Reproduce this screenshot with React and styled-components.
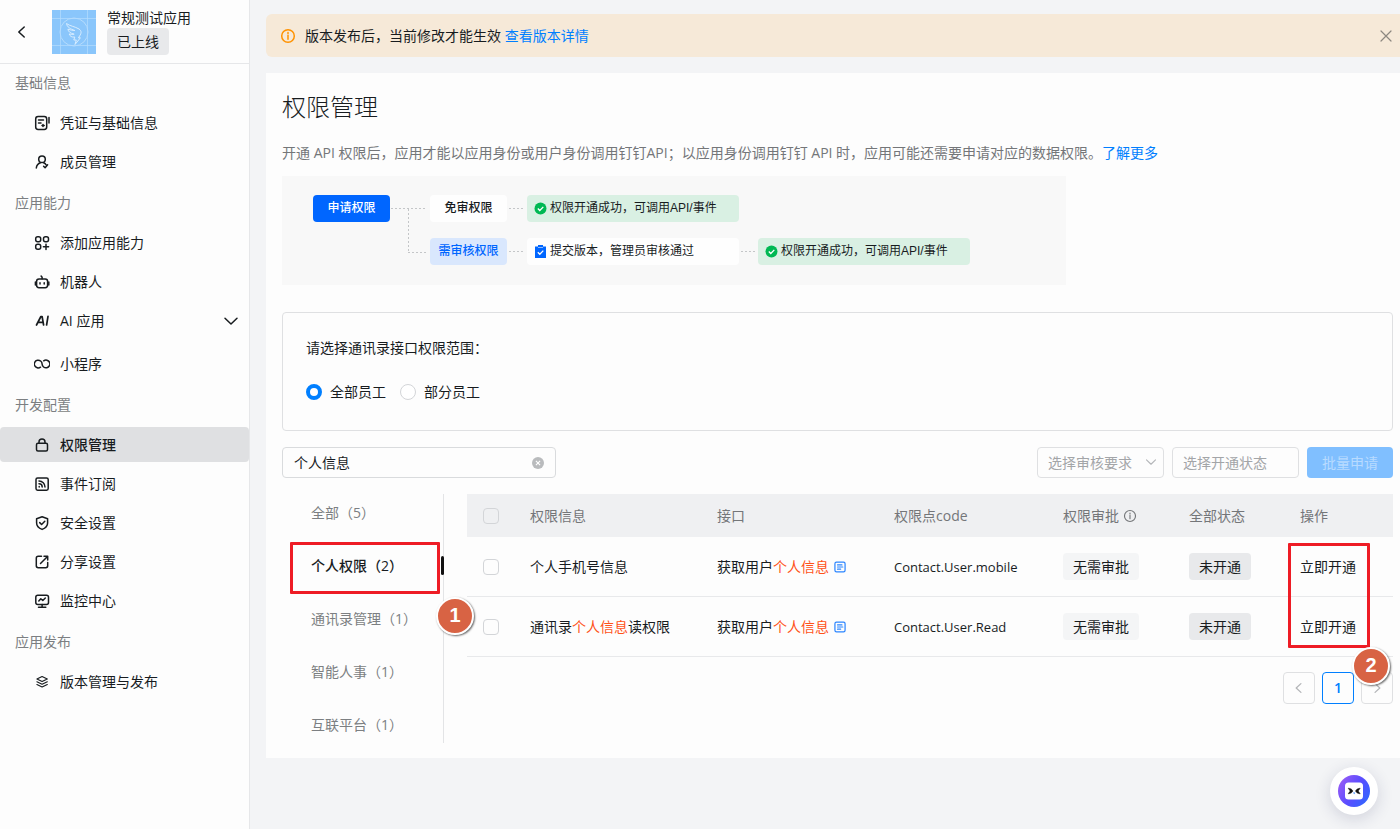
import React, { useState } from "react";
import styled, { createGlobalStyle } from "styled-components";

const GlobalStyle = createGlobalStyle`
  * {
    box-sizing: border-box;
  }
  body {
    margin: 0;
    background: #f3f4f6;
    color: #181c1f;
    font: 14px/22px "Open Sans", "Noto Sans CJK SC", sans-serif;
  }
  button, input, select {
    font: inherit;
    color: inherit;
  }
  a {
    color: #007fff;
    text-decoration: none;
  }
  svg {
    display: block;
    flex: none;
  }
`;

/* ---------- layout ---------- */

const Page = styled.div`
  display: flex;
  min-height: 100vh;
  overflow-x: hidden;
`;

const Sidebar = styled.aside`
  flex: none;
  width: 250px;
  background: #fdfdfd;
  border-right: 1px solid #e6e7e9;
`;

const AppHeader = styled.header`
  display: flex;
  align-items: center;
  height: 64px;
  padding-left: 14px;
  border-bottom: 1px solid #e6e7e9;
`;

const BackButton = styled.button`
  width: 16px;
  height: 16px;
  margin-right: 22px;
  padding: 0;
  border: 0;
  background: none;
`;

const AppInfo = styled.div`
  display: flex;
  flex-direction: column;
  align-items: flex-start;
  margin-left: 11px;
  line-height: 20px;
`;

const Tag = styled.span`
  display: inline-block;
  height: 27px;
  padding: 0 10px;
  border-radius: 4px;
  line-height: 28px;
  background: ${(props) => (props.$light ? "#f4f5f6" : "#e8e9eb")};
`;

const Group = styled.section`
  margin-bottom: 5px;
`;

const GroupTitle = styled.h2`
  height: 38px;
  margin: 0 0 3px;
  padding-left: 15px;
  font-size: 14px;
  font-weight: 400;
  line-height: 38px;
  color: #7c7f82;
`;

const NavList = styled.ul`
  display: flex;
  flex-direction: column;
  gap: 4px;
  margin: 0;
  padding: 0;
  list-style: none;
`;

const NavLink = styled.a`
  display: flex;
  align-items: center;
  gap: 10px;
  height: 35px;
  margin-bottom: ${(props) => (props.$parent ? "4px" : "0")};
  padding: 0 10px 0 34px;
  border-radius: 4px;
  background: ${(props) => (props.$active ? "#dfe0e2" : "none")};
  color: #181c1f;
  font-weight: ${(props) => (props.$active ? 500 : 400)};

  span {
    flex: 1;
  }
`;

const Main = styled.main`
  flex: 1;
  min-width: 0;
  padding: 14px 0 0 16px;
`;

const Banner = styled.div`
  display: flex;
  align-items: center;
  gap: 9px;
  height: 43px;
  margin-bottom: 16px;
  padding: 0 6px 0 14px;
  border-radius: 6px 0 0 6px;
  background: #f6e9d8;

  p {
    flex: 1;
    margin: 0;
  }
`;

const IconButton = styled.button`
  display: flex;
  padding: 0;
  border: 0;
  background: none;
  color: ${(props) => props.$color || "#8c8780"};
`;

const Card = styled.div`
  padding: 18px 7px 15px 16px;
  background: #fdfdfd;
`;

const Title = styled.h1`
  margin: 0 0 19px;
  font-size: 24px;
  font-weight: 300;
  line-height: 32px;
`;

const Description = styled.p`
  margin: 0 0 12px;
  color: #747679;
`;

/* ---------- flow diagram ---------- */

const Flow = styled.div`
  display: grid;
  grid-template-columns: 77px 40px 77px 20px 212px 19px 212px;
  grid-template-rows: 27px 27px;
  row-gap: 16px;
  max-width: 784px;
  margin-bottom: 27px;
  padding: 19px 31px 20px;
  background: #f8f8f8;
  font-family: "Liberation Sans", "Noto Sans CJK SC", sans-serif;
  font-size: 12px;
  line-height: 27px;
`;

const Step = styled.div`
  grid-column: ${(props) => props.$col};
  grid-row: ${(props) => props.$row || 1};
  border-radius: 4px;
  background: ${(props) => props.$bg || "#fefefe"};
  color: ${(props) => props.$color || "#181c1f"};
  font-weight: 500;
  text-align: center;
`;

const Result = styled.div`
  display: flex;
  align-items: center;
  gap: 3px;
  grid-column: ${(props) => props.$col};
  grid-row: ${(props) => props.$row || 1};
  padding-left: 7px;
  border-radius: 4px;
  background: ${(props) => (props.$done ? "#d9f0e3" : "#fefefe")};
`;

const Branch = styled.svg`
  grid-column: 2;
  grid-row: 1 / 3;
`;

const Link = styled.svg`
  grid-column: ${(props) => props.$col};
  grid-row: ${(props) => props.$row || 1};
`;

/* ---------- scope, filters ---------- */

const Scope = styled.fieldset`
  min-width: 0;
  margin: 0 0 16px;
  padding: 24px 23px 27px;
  border: 1px solid #dfe0e2;
  border-radius: 4px;

  legend {
    float: left;
    width: 100%;
    margin-bottom: 22px;
    padding: 0;
  }
`;

const Radios = styled.div`
  display: flex;
  gap: 14px;
  clear: both;
`;

const RadioLabel = styled.label`
  display: flex;
  align-items: center;
  gap: 8px;

  input {
    appearance: none;
    width: 16px;
    height: 16px;
    margin: 0;
    border: 1px solid #d3d5d8;
    border-radius: 50%;
    background: #fff;
  }
  input:checked {
    border: 4px solid #007fff;
  }
`;

const Toolbar = styled.div`
  display: flex;
  gap: 8px;
  height: 31px;
  margin-bottom: 16px;
`;

const SearchBox = styled.div`
  display: flex;
  align-items: center;
  width: 274px;
  margin-right: auto;
  padding: 0 11px;
  border: 1px solid #d9dbdd;
  border-radius: 4px;

  input {
    flex: 1;
    min-width: 0;
    padding: 0;
    border: 0;
    outline: 0;
    background: none;
  }
`;

const SelectBox = styled.div`
  display: flex;
  position: relative;
  width: 127px;

  select {
    appearance: none;
    width: 100%;
    padding: 0 10px;
    border: 1px solid #dfe0e2;
    border-radius: 4px;
    background: #fdfdfd;
    color: #a3a5a8;
  }
  svg {
    position: absolute;
    top: 9px;
    right: 7px;
    pointer-events: none;
  }
`;

const ApplyButton = styled.button`
  width: 86px;
  padding: 0;
  border: 0;
  border-radius: 4px;
  background: #80bfff;
  color: #b8dbff;
`;

/* ---------- tabs and table ---------- */

const Columns = styled.div`
  display: flex;
  align-items: flex-start;
  gap: 23px;
`;

const Tabs = styled.nav`
  display: flex;
  flex-direction: column;
  flex: none;
  gap: 16px;
  width: 162px;
  border-right: 1px solid #e3e4e6;
`;

const Tab = styled.button`
  position: relative;
  height: 37px;
  padding: 0 0 0 29px;
  border: 0;
  background: none;
  color: ${(props) => (props.$active ? "#181c1f" : "#7c7f82")};
  font-weight: ${(props) => (props.$active ? 500 : 400)};
  text-align: left;
`;

const TabMark = styled.span`
  position: absolute;
  top: 9px;
  right: -1px;
  width: 3px;
  height: 19px;
  border-radius: 2px;
  background: #111;
`;

const Content = styled.div`
  flex: 1;
  min-width: 0;
  position: relative;
`;

const Table = styled.table`
  width: 100%;
  margin-bottom: 15px;
  border-collapse: separate;
  border-spacing: 0;
  table-layout: fixed;

  th, td {
    padding: 0 0 0 16px;
    font-weight: 400;
    text-align: left;
    white-space: nowrap;
  }
  th {
    height: 43px;
    background: #eff0f2;
    color: #747679;
  }
  td {
    height: 60px;
    border-bottom: 1px solid #e8e9eb;
  }
`;

const CellLine = styled.span`
  display: flex;
  align-items: center;
  gap: 4px;
`;

const Code = styled.span`
  font-size: 13px;
`;

const Mark = styled.em`
  color: #ff5219;
  font-style: normal;
`;

const Checkbox = styled.input`
  appearance: none;
  display: block;
  width: 16px;
  height: 16px;
  margin: 0;
  border: 1px solid #d3d5d8;
  border-radius: 4px;
`;

const TextButton = styled.button`
  padding: 0;
  border: 0;
  background: none;
`;

const Pager = styled.div`
  display: flex;
  justify-content: flex-end;
  gap: 7px;
`;

const PageButton = styled.button`
  display: flex;
  align-items: center;
  justify-content: center;
  width: 32px;
  height: 32px;
  padding: 0;
  border: 1px solid ${(props) => (props.$current ? "#007fff" : "#dfe0e2")};
  border-radius: 4px;
  background: none;
  color: ${(props) => (props.$current ? "#007fff" : "#b4b6b9")};
  font-weight: 600;
`;

/* ---------- overlays ---------- */

const Frame = styled.span`
  position: absolute;
  border: 3px solid #ee1c25;
  border-radius: 1px;
  pointer-events: none;
`;

const TabFrame = styled(Frame)`
  top: -5px;
  left: 8px;
  width: 150px;
  height: 52px;
`;

const ActionFrame = styled(Frame)`
  top: 49px;
  right: 23px;
  width: 82px;
  height: 105px;
`;

const Bubble = styled.span`
  position: absolute;
  width: 38px;
  height: 38px;
  border: 2px solid #fff;
  border-radius: 50%;
  background: #d86344;
  box-shadow: 1px 1px 2px rgba(0, 0, 0, 0.6);
  color: #fff;
  font: bold 20px/33px "Liberation Sans", Arial, sans-serif;
  text-align: center;
`;

const TabBubble = styled(Bubble)`
  top: 103px;
  left: -31px;
`;

const ActionBubble = styled(Bubble)`
  top: 153px;
  right: 3px;
`;

const Assistant = styled.button`
  display: flex;
  align-items: center;
  justify-content: center;
  position: fixed;
  right: 22px;
  bottom: 14px;
  width: 48px;
  height: 48px;
  padding: 0;
  border: 0;
  border-radius: 50%;
  background: #fff;
  box-shadow: 0 4px 16px rgba(30, 35, 90, 0.16);
`;

/* ---------- icons ---------- */

const shapes = {
  credential: (
    <>
      <rect x="1.7" y="1.5" width="11" height="13" rx="2.4" />
      <path d="M4.5 5h5M4.5 8h2.5M15 2.5v5.5M9 9.5v2M8 10.5h2.2" />
    </>
  ),
  member: (
    <>
      <circle cx="8" cy="5.3" r="3.3" />
      <path d="M2.3 14c.3-2.8 1.9-4.6 4.2-5.3M9.6 8.7c1.1.5 2 1.2 2.6 2.3M9.6 12.2l1.5 1.6 2.500-3" />
    </>
  ),
  apps: (
    <>
      <rect x="1.7" y="1.7" width="5" height="5" rx="2" />
      <rect x="9.5" y="1.7" width="5" height="5" rx="2" />
      <rect x="1.7" y="9.3" width="5" height="5" rx="2" />
      <path d="M12 9.2v5.2M9.400 11.800h5.200" />
    </>
  ),
  robot: (
    <>
      <rect x="2.600" y="4.900" width="11" height="8.800" rx="2.400" />
      <path d="M1.400 8v3M14.800 8v3M6 8.700v1.200M10.200 8.700v1.200M8.100 4.800V3.200L7.100 2" />
    </>
  ),
  loop: <path d="M6.500 11.200A3.900 3.900 0 1 1 8.100 8 3.900 3.900 0 1 0 9.700 4.800" />,
  lock: (
    <>
      <rect x="2.500" y="6.300" width="11" height="7.700" rx="1.500" />
      <path d="M5 6.200V5a3 3 0 0 1 6 0v1.200" />
    </>
  ),
  feed: (
    <>
      <rect x="2" y="2" width="12.200" height="12.200" rx="1.600" />
      <path d="M5 5c3.400 0 6 2.600 6 6M5 7.800c1.900 0 3.200 1.300 3.200 3.200M5.200 10.500v.5" />
    </>
  ),
  shield: (
    <>
      <path d="M8.100 1.800 13.600 3.700V8c0 3-2.200 5.200-5.500 6.400C4.800 13.200 2.600 11 2.600 8V3.700z" />
      <path d="m5.700 7.600 1.900 1.900 3.200-3.200" />
    </>
  ),
  share: (
    <path d="M7.500 2.300H4.200A1.900 1.900 0 0 0 2.300 4.200v7.600c0 1 .9 1.900 1.900 1.900h7.600c1 0 1.900-.9 1.900-1.900V8.500M10 2.300h3.700V6M13.500 2.500 6.500 9.500" />
  ),
  monitor: (
    <>
      <rect x="1.800" y="2.200" width="12.700" height="9.200" rx="2" />
      <path d="M4.800 8 6.800 5.700 8.800 7.500 11.300 5M8.100 11.500v2.600M4.500 14.200h7.300" />
    </>
  ),
  layers: (
    <path
      strokeWidth="1.100"
      d="M8.100 2.500 13.300 5 8.100 7.500 2.900 5zM2.900 7.700l5.200 2.500 5.200-2.500M2.900 10.500l5.200 2.500 5.200-2.500"
    />
  ),
  ai: <path strokeWidth="1.700" d="M2.500 12 6.900 3.500h1.200l1.500 8.500M4.300 9.400h4.600M14 3.400 12.600 12" />,
  left: <path d="M10.200 3 4.800 8l5.400 5" />,
  right: <path d="M5.800 3 11.200 8l-5.400 5" />,
  down: <path d="M2 5.200 8 11l6-5.800" />,
  close: <path strokeWidth="1.200" d="m3 3 10 10M13 3 3 13" />,
  info: (
    <>
      <circle cx="8" cy="8" r="6.300" />
      <path d="M8 7.200v4M8 4.600v1" />
    </>
  ),
  note: (
    <>
      <rect x="2.200" y="2.500" width="11.600" height="11" rx="1.800" />
      <path d="M5.200 5.600h5M5.200 8h6M5.200 10.500h3.500" />
    </>
  ),
};

const Icon = ({ name, size = 16, width = 1.5 }) => (
  <svg
    width={size}
    height={size}
    viewBox="0 0 16 16"
    fill="none"
    stroke="currentColor"
    strokeWidth={width}
    strokeLinecap="round"
    strokeLinejoin="round"
    aria-hidden="true"
  >
    {shapes[name]}
  </svg>
);

const AppLogo = () => (
  <svg width="44" height="44" viewBox="0 0 44 44" fill="none" stroke="#b5dcfd" strokeWidth="1">
    <rect width="44" height="44" fill="#8ac6fb" stroke="none" />
    <path d="M0 8.500h44M0 35.500h44M8.500 0v44M35.500 0v44" strokeWidth=".7" />
    <circle cx="22" cy="22" r="14" />
    <path
      d="M14.500 13.500c3 2.500 8.500 3 12.500 5.500 3 2 2.300 4.500.6 7l-1.200 1.800h2L23 34.500l1.300-4.500h-2.500l1-3c-3 .5-5-.8-5.600-3 2 .5 3.500.5 5 .2-4-1-6-2.700-6.300-5 2 .8 5 1.300 7 1.300-4.500-1.500-8-3.500-8.400-7z"
      stroke="#d8edff"
    />
  </svg>
);

const DoneIcon = () => (
  <svg width="13" height="13" viewBox="0 0 13 13">
    <circle cx="6.500" cy="6.500" r="6" fill="#00b853" />
    <path d="m3.800 6.500 2 2 3.500-3.600" fill="none" stroke="#fff" strokeWidth="1.300" />
  </svg>
);

const ClipIcon = () => (
  <svg width="13" height="13" viewBox="0 0 13 13">
    <path d="M1 1.500h3V0h5v1.500h3V13H1z" fill="#0066ff" />
    <path d="M4 2.500h5" stroke="#8fbaff" />
    <path d="m3.800 7.200 2 2 3.500-3.600" fill="none" stroke="#fff" strokeWidth="1.300" />
  </svg>
);

const ClearIcon = () => (
  <svg width="12" height="12" viewBox="0 0 12 12">
    <circle cx="6" cy="6" r="6" fill="#b9bbbd" />
    <path d="m3.900 3.900 4.200 4.200M8.100 3.900 3.900 8.100" stroke="#fff" strokeWidth="1.100" />
  </svg>
);

const AssistantIcon = () => (
  <svg width="32" height="32" viewBox="0 0 32 32">
    <defs>
      <linearGradient id="assistant" x1="0" y1="0.200" x2="1" y2="0.800">
        <stop offset="0" stopColor="#9a5cf5" />
        <stop offset="0.500" stopColor="#5b4dff" />
        <stop offset="1" stopColor="#2f66ff" />
      </linearGradient>
    </defs>
    <circle cx="16" cy="16" r="16" fill="url(#assistant)" />
    <rect x="7" y="7.500" width="18" height="17" rx="3.500" fill="#fff" />
    <path
      d="M10.200 13.200c2.400.2 4 1.200 4.700 2.800-.7 1.600-2.300 2.600-4.700 2.800l2-2.800zM22.200 13.200c-2.400.2-4 1.200-4.700 2.800.7 1.600 2.300 2.600 4.700 2.800l-2-2.800z"
      fill="#111"
      stroke="#111"
      strokeWidth=".5"
    />
    <path d="m15 17.500 1.200 1.700 1.200-1.700z" fill="#3c8cff" />
  </svg>
);

const FlowLink = ({ col, row }) => (
  <Link $col={col} $row={row} width="19" height="27" fill="none" stroke="#c4c6c8" strokeDasharray="2 2">
    <path d="M2 13.500h16" />
  </Link>
);

/* ---------- data ---------- */

const menu = [
  {
    title: "基础信息",
    items: [
      { icon: "credential", text: "凭证与基础信息" },
      { icon: "member", text: "成员管理" },
    ],
  },
  {
    title: "应用能力",
    items: [
      { icon: "apps", text: "添加应用能力" },
      { icon: "robot", text: "机器人" },
      { icon: "ai", text: "AI 应用", parent: true },
      { icon: "loop", text: "小程序" },
    ],
  },
  {
    title: "开发配置",
    items: [
      { icon: "lock", text: "权限管理", active: true },
      { icon: "feed", text: "事件订阅" },
      { icon: "shield", text: "安全设置" },
      { icon: "share", text: "分享设置" },
      { icon: "monitor", text: "监控中心" },
    ],
  },
  {
    title: "应用发布",
    items: [{ icon: "layers", text: "版本管理与发布" }],
  },
];

const tabs = ["全部（5）", "个人权限（2）", "通讯录管理（1）", "智能人事（1）", "互联平台（1）"];

const rows = [
  { name: "个人手机号信息", label: <>个人手机号信息</>, code: "Contact.User.mobile" },
  { name: "通讯录个人信息读权限", label: <>通讯录<Mark>个人信息</Mark>读权限</>, code: "Contact.User.Read" },
];

export default function App() {
  const [scope, setScope] = useState("all");
  const [keyword, setKeyword] = useState("个人信息");
  const [tab, setTab] = useState(1);

  return (
    <Page>
      <GlobalStyle />
      <Sidebar>
        <AppHeader>
          <BackButton aria-label="返回">
            <Icon name="left" />
          </BackButton>
          <AppLogo />
          <AppInfo>
            <span>常规测试应用</span>
            <Tag>已上线</Tag>
          </AppInfo>
        </AppHeader>
        {menu.map((group) => (
          <Group key={group.title}>
            <GroupTitle>{group.title}</GroupTitle>
            <NavList>
              {group.items.map((item) => (
                <li key={item.text}>
                  <NavLink href="#" $active={item.active} $parent={item.parent}>
                    <Icon name={item.icon} />
                    <span>{item.text}</span>
                    {item.parent && <Icon name="down" />}
                  </NavLink>
                </li>
              ))}
            </NavList>
          </Group>
        ))}
      </Sidebar>

      <Main>
        <Banner>
          <IconButton as="span" $color="#ff9200">
            <Icon name="info" />
          </IconButton>
          <p>
            版本发布后，当前修改才能生效 <a href="#">查看版本详情</a>
          </p>
          <IconButton aria-label="关闭">
            <Icon name="close" />
          </IconButton>
        </Banner>

        <Card>
          <Title>权限管理</Title>
          <Description>
            开通 API 权限后，应用才能以应用身份或用户身份调用钉钉API；以应用身份调用钉钉 API
            时，应用可能还需要申请对应的数据权限。<a href="#">了解更多</a>
          </Description>

          <Flow>
            <Step $col={1} $bg="#0066ff" $color="#fff">申请权限</Step>
            <Branch width="40" height="70" fill="none" stroke="#c4c6c8" strokeDasharray="2 2">
              <path d="M1 13.500h35M18.500 14v43M18 57.500h18" />
            </Branch>
            <Step $col={3}>免审权限</Step>
            <FlowLink col={4} />
            <Result $col={5} $done>
              <DoneIcon />
              权限开通成功，可调用API/事件
            </Result>
            <Step $col={3} $row={2} $bg="#d9e7fd" $color="#0066ff">需审核权限</Step>
            <FlowLink col={4} row={2} />
            <Result $col={5} $row={2}>
              <ClipIcon />
              提交版本，管理员审核通过
            </Result>
            <FlowLink col={6} row={2} />
            <Result $col={7} $row={2} $done>
              <DoneIcon />
              权限开通成功，可调用API/事件
            </Result>
          </Flow>

          <Scope>
            <legend>请选择通讯录接口权限范围：</legend>
            <Radios>
              <RadioLabel>
                <input type="radio" name="scope" checked={scope === "all"} onChange={() => setScope("all")} />
                全部员工
              </RadioLabel>
              <RadioLabel>
                <input type="radio" name="scope" checked={scope === "part"} onChange={() => setScope("part")} />
                部分员工
              </RadioLabel>
            </Radios>
          </Scope>

          <Toolbar>
            <SearchBox>
              <input aria-label="搜索权限" value={keyword} onChange={(e) => setKeyword(e.target.value)} />
              <IconButton aria-label="清空" onClick={() => setKeyword("")}>
                <ClearIcon />
              </IconButton>
            </SearchBox>
            <SelectBox>
              <select aria-label="选择审核要求">
                <option>选择审核要求</option>
              </select>
              <IconButton as="span" $color="#b4b6b9">
                <Icon name="down" size={12} />
              </IconButton>
            </SelectBox>
            <SelectBox>
              <select aria-label="选择开通状态">
                <option>选择开通状态</option>
              </select>
            </SelectBox>
            <ApplyButton disabled>批量申请</ApplyButton>
          </Toolbar>

          <Columns>
            <Tabs>
              {tabs.map((text, i) => (
                <Tab key={text} $active={i === tab} onClick={() => setTab(i)}>
                  {text}
                  {i === tab && <TabMark />}
                  {i === 1 && <TabFrame />}
                </Tab>
              ))}
            </Tabs>

            <Content>
              <Table>
                <colgroup>
                  <col width="47" />
                  <col width="187" />
                  <col width="177" />
                  <col width="169" />
                  <col width="126" />
                  <col width="111" />
                  <col width="109" />
                </colgroup>
                <thead>
                  <tr>
                    <th><Checkbox type="checkbox" aria-label="全选" /></th>
                    <th>权限信息</th>
                    <th>接口</th>
                    <th>权限点code</th>
                    <th>
                      <CellLine>
                        权限审批
                        <Icon name="info" size={14} width={1.3} />
                      </CellLine>
                    </th>
                    <th>全部状态</th>
                    <th>操作</th>
                  </tr>
                </thead>
                <tbody>
                  {rows.map((row) => (
                    <tr key={row.code}>
                      <td><Checkbox type="checkbox" aria-label={row.name} /></td>
                      <td>{row.label}</td>
                      <td>
                        <CellLine>
                          <span>获取用户<Mark>个人信息</Mark></span>
                          <IconButton $color="#2b85ff" aria-label="查看文档">
                            <Icon name="note" size={14} width={1.4} />
                          </IconButton>
                        </CellLine>
                      </td>
                      <td><Code>{row.code}</Code></td>
                      <td><Tag $light>无需审批</Tag></td>
                      <td><Tag>未开通</Tag></td>
                      <td><TextButton>立即开通</TextButton></td>
                    </tr>
                  ))}
                </tbody>
              </Table>
              <Pager>
                <PageButton aria-label="上一页"><Icon name="left" size={14} /></PageButton>
                <PageButton $current>1</PageButton>
                <PageButton aria-label="下一页"><Icon name="right" size={14} /></PageButton>
              </Pager>
              <ActionFrame />
              <TabBubble>1</TabBubble>
              <ActionBubble>2</ActionBubble>
            </Content>
          </Columns>
        </Card>
      </Main>

      <Assistant aria-label="智能助手">
        <AssistantIcon />
      </Assistant>
    </Page>
  );
}
